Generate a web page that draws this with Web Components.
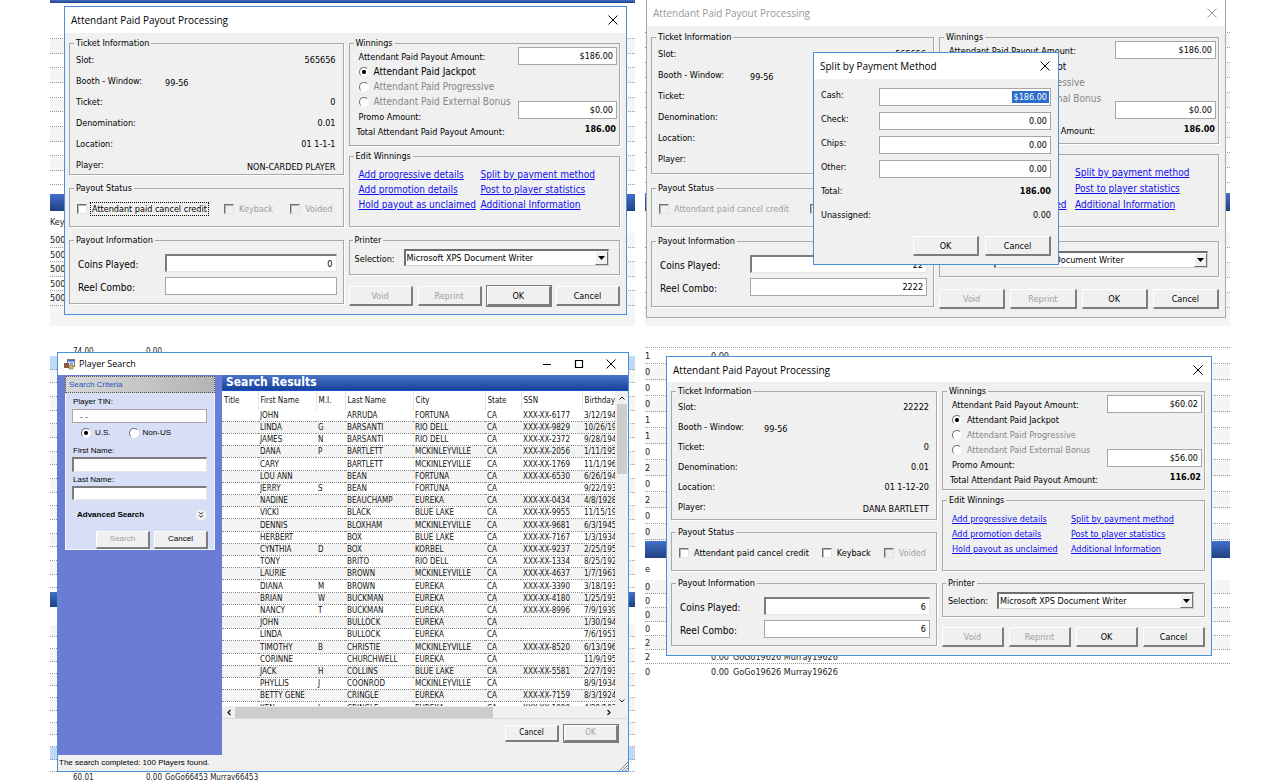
<!DOCTYPE html>
<html lang="en">
<head>
<meta charset="utf-8">
<title>Attendant Paid Payout Processing</title>
<style>
  body { margin: 0; background: #fff; }
</style>
</head>
<body>
<payout-gallery></payout-gallery>

<script>
const UI = '"DejaVu Sans Condensed","DejaVu Sans","Noto Sans",sans-serif';
const TITLE = '"Open Sans","Noto Sans",sans-serif';

/* Classic control look shared by every window */
const controls = `
  *, *::before, *::after { box-sizing: border-box; }
  input, select, button { font: inherit; color: inherit; margin: 0; border-radius: 0; }
  input[type=text] {
    width: 100%; height: 18px; padding: 0 3px; text-align: right;
    background: #fff; border: 1px solid #a6a6a6; outline: 0;
  }
  input[type=text].sunken {
    border-color: #7c7c7c #e6e6e6 #e6e6e6 #7c7c7c; border-width: 2px 1px 1px 2px;
  }
  input[type=checkbox] {
    appearance: none; flex: none; width: 10px; height: 10px; background: #fff;
    border: 1px solid; border-color: #707070 #e3e3e3 #e3e3e3 #707070;
    box-shadow: inset 1px 1px 0 #b5b5b5;
  }
  input[type=checkbox]:disabled { background: #f0f0f0; }
  input[type=radio] {
    appearance: none; flex: none; width: 10px; height: 10px; background: #fff;
    border: 1px solid; border-color: #707070 #f8f8f8 #f8f8f8 #707070; border-radius: 50%;
  }
  input[type=radio]:checked { background: radial-gradient(circle, #000 0 1.5px, #fff 2.5px); }
  button {
    height: 20px; padding: 0; background: #f0f0f0; text-align: center;
    border-style: solid; border-width: 1px 2px 2px 1px;
    border-color: #fff #7d7d7d #7d7d7d #fff;
  }
  button.default { box-shadow: 0 0 0 1px #7a7a7a; }
  :disabled, .off { color: #a0a0a0; }
  label, legend { white-space: nowrap; }
`;

function define(name, html, setup) {
  const template = document.createElement('template');
  template.innerHTML = html;
  customElements.define(name, class extends HTMLElement {
    constructor() {
      super();
      this.attachShadow({ mode: 'open' }).append(template.content.cloneNode(true));
    }
    connectedCallback() {
      if (setup && !this.ready) { this.ready = true; setup(this, this.shadowRoot); }
    }
  });
}

/* Striped list that lies behind a window */
const repeat = (heights, cells = []) =>
  heights.map((h, i) => [h, i % 2 ? 'row' : 'row alt', cells[i] || []]);
const d = (...list) => list.map(t => [[66, t]]);
const backdrops = {
  first: { size: 9, rows: [
    [3, 'band'], [36, 'line'],
    ...repeat([15, 14, 15, 15, 14, 15, 15, 14, 15, 14]),
    [9, ''], [17, 'band'], [22, 'head', [[40, 'Key']]],
    ...repeat([15, 14, 15, 14, 15], Array(5).fill([[40, '500']])),
    [20, 'tail']] },
  second: { size: 9, rows: [
    [33, 'line'],
    ...repeat([15, 15, 15, 15, 15, 15, 15, 15, 15, 15]),
    [10, ''], [18, 'band'], [22, ''],
    ...repeat([15, 15, 15, 15, 15]),
    [18, 'tail']] },
  third: { size: 8, rows: [
    [9, 'line first', [[23, ''], [73, '74.00'], [19, '0.00']]], [14, 'row pick'],
    ...repeat([13, 14, 14, 13, 14, 14, 13, 14, 14, 13, 14, 14, 13, 14, 14, 13]),
    [4, ''], [15, 'band'], [18, ''],
    ...repeat([12, 12, 13, 12, 12, 12, 13, 12, 12, 12]),
    [13, 'row pick'], [12, 'row'],
    [9, 'last', [[23, ''], [73, '60.01'], [19, '0.00'], [100, 'GoGo66453 Murray66453']]]] },
  fourth: { size: 9, rows: [
    [1, 'line'],
    [16, 'row', [[66, '1'], [22, '0.00']]],
    ...repeat(Array(11).fill(16), d('0', '0', '0', '1', '1', '0', '2', '0', '2', '0', '0')),
    [1, ''], [17, 'band'], [22, 'head', [[66, 'e']]],
    ...repeat([14, 14, 14, 14, 14, 14], [...d('0', '0', '0', '0', '2'),
      [[66, '2'], [22, '0.00'], [120, 'GoGo19626 Murray19626']]]),
    [15, '', [[66, '0'], [22, '0.00'], [120, 'GoGo19626 Murray19626']]]] }
};

define('list-backdrop', `
  <style>
    :host { display: block; overflow: hidden; color: #222; font-family: ${UI}; }
    div { display: flex; box-sizing: border-box; align-items: center; overflow: hidden; white-space: nowrap; background: #fff; }
    .line, .row { border-bottom: 1px dotted #999; }
    .alt { background: #f5f5f5; }
    .pick { background: #bfdaf6; }
    .tail { background: #f5f5f5; }
    .band { background: linear-gradient(#4470cc, #1f3f80); }
    span { flex: none; }
    .first { align-items: flex-end; border: 0; }
    .last { align-items: flex-start; line-height: 12px; }
  </style>`, (host, root) => {
    const { size, rows } = backdrops[host.getAttribute('rows')];
    host.style.fontSize = size + 'px';
    for (const [height, kind, cells = []] of rows) {
      const row = document.createElement('div');
      row.className = kind;
      row.style.height = height + 'px';
      for (const [width, text] of cells) {
        const cell = document.createElement('span');
        cell.style.width = width + 'px';
        cell.textContent = text;
        row.append(cell);
      }
      root.append(row);
    }
  });

/* Window frame: title bar and client area */
define('app-window', `
  <style>
    ${controls}
    :host {
      display: flex; flex-direction: column; box-sizing: border-box;
      border: 1px solid #4a90d9; background: #f0f0f0; color: #000; font: 9px/12px ${UI};
    }
    :host([inactive]) { border-color: #a8a8a8; }
    header {
      display: flex; align-items: center; flex: none; height: var(--bar, 26px);
      padding: 0 7px 0 6px; background: #fff; font: var(--title, 10px)/14px ${TITLE};
    }
    h2 { flex: 1; margin: 0; font: inherit; }
    button { display: grid; place-items: center; width: 12px; height: 12px; border: 0; background: none; }
    svg { display: block; }
    :host([inactive]) header { color: #999; }
    .extra { display: none; margin-right: 20px; }
    :host([sizable]) .extra { display: grid; }
    :host([sizable]) header { padding-right: 11px; }
  </style>
  <header>
    <slot name="icon"></slot>
    <h2></h2>
    <button class="extra" aria-label="Minimize"><svg width="10" height="10"><path d="M1 5.5h8" stroke="currentColor"/></svg></button>
    <button class="extra" aria-label="Maximize"><svg width="10" height="10"><path d="M1.5 1.5h7v7h-7z" fill="none" stroke="currentColor" stroke-width="1.2"/></svg></button>
    <button class="close" aria-label="Close"><svg width="10" height="10"><path d="M.5.5l9 9M9.500.5l-9 9" stroke="currentColor"/></svg></button>
  </header>
  <slot></slot>`, (host, root) => {
    root.querySelector('h2').textContent = host.getAttribute('heading');
  });

define('payout-window', `
  <style>
    ${controls}
    :host { display: block; font: 9px/12px ${UI}; }
    .body {
      display: grid; grid-template-columns: 274fr 271fr; column-gap: 5px; align-items: start;
      padding: var(--top, 4px) 6px 8px 4px;
    }
    .col { display: flex; flex-direction: column; min-width: 0; }
    .status, .info { margin-top: var(--gap); }
    fieldset {
      display: block; min-width: 0; margin: 0; padding: 0 6px; border: 1px solid #a9a9a9;
      box-shadow: 1px 1px 0 #fff;
    }
    legend { padding: 0 2px; margin-left: -2px; line-height: 12px; }
    dl { margin: 0; }
    dl div { display: flex; height: var(--row); align-items: center; }
    dt { width: var(--key); white-space: nowrap; }
    dd { flex: 1; margin: 0; text-align: right; padding-right: 1px; }
    .booth dd { text-align: left; }
    .low dd { padding-top: 4px; }
    .ticket { height: var(--ticket); }
    .status { height: 45px; }
    .checks { display: flex; align-items: center; height: 30px; padding: 0 2px 0 1px; }
    .checks label { margin: 0 auto 0 3px; padding: 1px; border: 1px solid transparent; line-height: 10px; }
    .checks label:last-of-type { margin-right: 0; }
    .checks .focus { border: 1px dotted #000; }
    .info { height: var(--info); }
    .fields { display: flex; flex-direction: column; gap: 5px; padding: 8px 0 0 2px; font-size: 10px; }
    .fields div { display: flex; align-items: center; }
    .fields label { flex: none; width: calc(var(--key) - 2px); padding-top: 4px; }
    .fields input { font-size: 9px; }
    .winnings { height: var(--winnings); padding: 0 2px 0 6px; }
    .money { display: flex; justify-content: space-between; }
    .left > * { display: flex; align-items: center; height: var(--line); padding-left: 3px; }
    .left .pick { font-size: var(--wide); gap: 5px; }
    .left .off { color: #868686; }
    .left .total { padding: 0 0 0 1px; white-space: nowrap; }
    .right { display: flex; flex-direction: column; justify-content: space-between; align-items: flex-end; width: var(--amount); margin-top: -2px; }
    .gap { flex: 1; }
    .right b { line-height: 20px; padding-right: 1px; }
    .edit { height: var(--edit); margin-top: 4px; }
    nav { display: grid; grid-template-columns: var(--links) 1fr; grid-auto-rows: var(--line); align-items: center; padding: 5px 0 0 3px; font-size: var(--wide); }
    a { color: #0f0fee; white-space: nowrap; justify-self: start; text-underline-offset: 1px; }
    .printer { height: var(--printer); margin-top: var(--gap); padding: 0 10px 0 5px; }
    .choose { display: flex; align-items: center; height: calc(var(--printer) - 18px); }
    .choose label { flex: none; width: 49px; padding-top: 2px; }
    .drop { position: relative; flex: 1; }
    select {
      display: block; appearance: none; width: 100%; height: 17px; padding: 0 1px; background: #fff;
      border: solid; border-width: 2px 1px 1px 2px; border-color: #6f6f6f #d0d0d0 #d0d0d0 #6f6f6f;
    }
    .drop span {
      position: absolute; inset: 2px 1px 1px auto; width: 13px; display: grid; place-items: center;
      background: #f0f0f0; border: 1px solid; border-color: #fff #707070 #707070 #fff; pointer-events: none;
    }
    .buttons { display: grid; grid-template-columns: repeat(4, 1fr); gap: 5px; margin-top: calc(var(--gap) + 4px); }
  </style>
  <app-window heading="Attendant Paid Payout Processing">
    <div class="body">
      <div class="col">
        <fieldset class="ticket"><legend>Ticket Information</legend>
          <dl>
            <div><dt>Slot:</dt><dd data-f="machine"></dd></div>
            <div class="booth low"><dt>Booth - Window:</dt><dd>99-56</dd></div>
            <div><dt>Ticket:</dt><dd>0</dd></div>
            <div><dt>Denomination:</dt><dd>0.01</dd></div>
            <div><dt>Location:</dt><dd data-f="location"></dd></div>
            <div class="low"><dt>Player:</dt><dd data-f="player"></dd></div>
          </dl>
        </fieldset>
        <fieldset class="status"><legend>Payout Status</legend>
          <div class="checks">
            <input type="checkbox" id="credit"><label for="credit">Attendant paid cancel credit</label>
            <input type="checkbox" id="keyback"><label for="keyback">Keyback</label>
            <input type="checkbox" id="voided"><label for="voided">Voided</label>
          </div>
        </fieldset>
        <fieldset class="info"><legend>Payout Information</legend>
          <div class="fields">
            <div><label for="coins">Coins Played:</label><input type="text" id="coins" class="sunken"></div>
            <div><label for="reel">Reel Combo:</label><input type="text" id="reel"></div>
          </div>
        </fieldset>
      </div>
      <div class="col">
        <fieldset class="winnings"><legend>Winnings</legend>
          <div class="money">
            <div class="left">
              <label for="amount">Attendant Paid Payout Amount:</label>
              <label class="pick"><input type="radio" name="kind" checked>Attendant Paid Jackpot</label>
              <label class="pick off"><input type="radio" name="kind" disabled>Attendant Paid Progressive</label>
              <label class="pick off"><input type="radio" name="kind" disabled>Attendant Paid External Bonus</label>
              <label for="promo">Promo Amount:</label>
              <span class="total">Total Attendant Paid Payout Amount:</span>
            </div>
            <div class="right">
              <input type="text" id="amount"><span class="gap"></span>
              <input type="text" id="promo"><b data-f="total"></b>
            </div>
          </div>
        </fieldset>
        <fieldset class="edit"><legend>Edit Winnings</legend>
          <nav>
            <a href="#progressive">Add progressive details</a><a href="#split">Split by payment method</a>
            <a href="#promotion">Add promotion details</a><a href="#post">Post to player statistics</a>
            <a href="#hold">Hold payout as unclaimed</a><a href="#additional">Additional Information</a>
          </nav>
        </fieldset>
        <fieldset class="printer"><legend>Printer</legend>
          <div class="choose">
            <label for="printer">Selection:</label>
            <div class="drop">
              <select id="printer"><option>Microsoft XPS Document Writer</option></select>
              <span><svg width="7" height="4"><path d="M0 0h7L3.500 4z"/></svg></span>
            </div>
          </div>
        </fieldset>
        <div class="buttons">
          <button disabled>Void</button><button disabled>Reprint</button><button id="ok">OK</button><button>Cancel</button>
        </div>
      </div>
    </div>
  </app-window>`, (host, root) => {
    const get = name => host.getAttribute(name) || '';
    root.querySelectorAll('[data-f]').forEach(el => el.textContent = get(el.dataset.f));
    for (const id of ['coins', 'reel', 'amount', 'promo']) root.getElementById(id).value = get(id);
    for (const id of get('off').split(' ')) {
      root.getElementById(id).disabled = true;
      root.querySelector(`label[for=${id}]`).classList.add('off');
    }
    root.querySelector('app-window').toggleAttribute('inactive', host.hasAttribute('inactive'));
    if (host.hasAttribute('focused')) {
      root.querySelector('label[for=credit]').classList.add('focus');
      root.getElementById('ok').classList.add('default');
    }
  });

define('split-window', `
  <style>
    ${controls}
    :host { display: block; font: 9px/12px ${UI}; }
    form { display: grid; grid-template-columns: 58px 1fr; row-gap: 6px; padding: 9px 7px 8px 7px; }
    form > * { min-height: 18px; }
    label, .name { line-height: 15px; }
    output { text-align: right; line-height: 15px; }
    input[type=text].selected { color: #fff; background: linear-gradient(#2a6dcc, #2a6dcc) right 1px center / 37px 12px no-repeat #fff; }
    .buttons { grid-column: 1 / -1; display: grid; grid-template-columns: 66px 66px; gap: 6px; justify-content: end; padding-top: 4px; }
    .total { font-weight: bold; }
  </style>
  <app-window heading="Split by Payment Method">
    <form>
      <label for="cash">Cash:</label><input type="text" id="cash" class="selected" value="$186.00">
      <label for="check">Check:</label><input type="text" id="check" value="0.00">
      <label for="chips">Chips:</label><input type="text" id="chips" value="0.00">
      <label for="other">Other:</label><input type="text" id="other" value="0.00">
      <span class="name">Total:</span><output class="total">186.00</output>
      <span class="name">Unassigned:</span><output>0.00</output>
      <div class="buttons"><button type="button">OK</button><button type="button">Cancel</button></div>
    </form>
  </app-window>`);

const players = `
JOHN||ARRUDA|FORTUNA|XXX-XX-6177|3/12/1944
LINDA|G|BARSANTI|RIO DELL|XXX-XX-9829|10/26/1950
JAMES|N|BARSANTI|RIO DELL|XXX-XX-2372|9/28/1944
DANA|P|BARTLETT|MCKINLEYVILLE|XXX-XX-2056|1/11/1955
CARY||BARTLETT|MCKINLEYVILLE|XXX-XX-1769|11/1/1966
LOU ANN||BEAN|FORTUNA|XXX-XX-6530|6/26/1944
JERRY|S|BEAN|FORTUNA||9/22/1933
NADINE||BEAUCHAMP|EUREKA|XXX-XX-0434|4/8/1928
VICKI||BLACK|BLUE LAKE|XXX-XX-9955|11/15/1950
DENNIS||BLOXHAM|MCKINLEYVILLE|XXX-XX-9681|6/3/1945
HERBERT||BOX|BLUE LAKE|XXX-XX-7167|1/3/1934
CYNTHIA|D|BOX|KORBEL|XXX-XX-9237|2/25/1955
TONY||BRITO|RIO DELL|XXX-XX-1334|8/25/1922
LAURIE||BROWN|MCKINLEYVILLE|XXX-XX-4637|1/7/1961
DIANA|M|BROWN|EUREKA|XXX-XX-3390|3/18/1933
BRIAN|W|BUCKMAN|EUREKA|XXX-XX-4180|1/25/1933
NANCY|T|BUCKMAN|EUREKA|XXX-XX-8996|7/9/1939
JOHN||BULLOCK|EUREKA||1/30/1944
LINDA||BULLOCK|EUREKA||7/6/1951
TIMOTHY|B|CHRISTIE|MCKINLEYVILLE|XXX-XX-8520|6/13/1966
CORINNE||CHURCHWELL|EUREKA||11/9/1955
JACK|H|COLLINS|BLUE LAKE|XXX-XX-5581|2/27/1933
PHYLLIS|J|COONROD|MCKINLEYVILLE||8/9/1934
BETTY GENE||CRINGLE|EUREKA|XXX-XX-7159|8/3/1924
KEN|J|CRINGLE|EUREKA|XXX-XX-1990|4/29/1933`.trim().split('\n').map(r => {
  const [first, mi, last, city, ssn, born] = r.split('|');
  return ['', first, mi, last, city, 'CA', ssn, born];
});

define('player-table', `
  <style>
    :host { display: block; overflow: hidden; background: #fff; font: 8px/11px ${UI}; color: #111; }
    table { width: 100%; table-layout: fixed; border-collapse: collapse; }
    th, td { padding: 0 0 0 2px; text-align: left; font-weight: normal; white-space: nowrap; overflow: hidden; }
    th { height: 19px; border-right: 1px solid #e5e5e5; }
    th:last-child { border: 0; }
    td { height: 11px; border-bottom: 1px dotted #8c8c8c; }
    tbody tr:nth-child(5n) td { height: 12px; }
    tbody tr:nth-child(even) { background: #f4f4f4; }
  </style>
  <table>
    <colgroup><col style="width:36px"><col style="width:58px"><col style="width:29px"><col style="width:68px"><col style="width:72px"><col style="width:36px"><col style="width:61px"><col></colgroup>
    <thead><tr><th>Title</th><th>First Name</th><th>M.I.</th><th>Last Name</th><th>City</th><th>State</th><th>SSN</th><th>Birthday</th></tr></thead>
    <tbody></tbody>
  </table>`, (host, root) => {
    const body = root.querySelector('tbody');
    for (const player of players) {
      const row = body.insertRow();
      for (const text of player) row.insertCell().textContent = text;
    }
  });

define('search-window', `
  <style>
    ${controls}
    :host { display: block; font: 8px/12px ${UI}; }
    app-window { --bar: 22px; --title: 9px; height: 100%; }
    .icon { margin-right: 4px; }
    .main { display: grid; grid-template-columns: 164px 1fr; flex: 1; min-height: 0; }
    aside { background: #6a7cd3; padding: 1px 7px 0; }
    h3 { margin: 0; height: 17px; padding-left: 3px; font: 8px/16px "Liberation Sans",sans-serif; color: #1f55c4; background: linear-gradient(90deg, #d8d8d8, #b4b4b4); border: 1px dotted #555; }
    form { display: flex; flex-direction: column; padding: 3px 7px 0 6px; height: 157px; background: #d6dff5; border: 1px solid #f4f6fc; border-top: 0; font: 8px/12px "Liberation Sans",sans-serif; }
    form label { line-height: 12px; padding-left: 1px; }
    form input[type=text] { text-align: left; height: 15px; margin-bottom: 2px; }
    form #tin { margin: 1px 0 4px; padding-left: 7px; }
    .kind { display: flex; gap: 17px; padding: 0 0 6px 8px; }
    .kind label { display: flex; align-items: center; gap: 4px; }
    .more { display: flex; justify-content: space-between; align-items: center; height: 26px; padding: 0 0 0 5px; }
    .actions { display: flex; gap: 4px; justify-content: flex-end; margin: 4px -1px 0 0; }
    .actions button { width: 54px; height: 18px; }
    .results { display: flex; flex-direction: column; min-width: 0; min-height: 0; }
    h1 { flex: none; margin: 0; height: 16px; padding-left: 4px; font: bold 12px/14px ${UI}; color: #fff; background: linear-gradient(#4a74cb, #17429b); border-bottom: 1px solid #1450c8; }
    .view { display: grid; grid-template-columns: 1fr 13px; height: 315px; }
    .bar { display: flex; align-items: center; background: #f0f0f0; }
    .v { flex-direction: column; padding: 5px 0 3px; }
    .v i { width: 10px; height: 70px; margin: 4px 0 auto; background: #cdcdcd; }
    .h { height: 13px; padding: 0 16px 0 4px; border-bottom: 1px solid #dcdcdc; }
    .h i { width: 258px; height: 11px; margin: 0 auto 0 3px; background: #cdcdcd; }
    .bottom { display: flex; gap: 5px; justify-content: flex-end; padding: 6px 10px; font: 8px/12px ${UI}; }
    .bottom button { width: 54px; height: 17px; }
    footer { display: flex; justify-content: space-between; align-items: center; flex: none; height: 16px; padding: 0 0 0 1px; font: 8px/12px "Liberation Sans",sans-serif; }
    footer svg { align-self: flex-end; }
    svg { flex: none; }
  </style>
  <app-window heading="Player Search" sizable>
    <svg slot="icon" class="icon" width="11" height="11" viewBox="0 0 11 11">
      <rect x="3.500" y=".5" width="7" height="7" fill="#e8e8e8" stroke="#777"/><rect x="4" y="1" width="6" height="1.500" fill="#3b6ed0"/>
      <rect x=".5" y="4.500" width="4" height="4" fill="#b5452c" stroke="#666"/><rect x="5" y="6" width="4" height="4" fill="#e4b13c" stroke="#777" stroke-width=".6"/><rect x="6" y="3.500" width="3" height="2" fill="#6f97dd"/>
    </svg>
    <div class="main">
      <aside>
        <h3>Search Criteria</h3>
        <form>
          <label for="tin">Player TIN:</label><input type="text" id="tin" value="- -">
          <div class="kind"><label><input type="radio" name="c" checked>U.S.</label><label><input type="radio" name="c">Non-US</label></div>
          <label for="first">First Name:</label><input type="text" id="first" class="sunken">
          <label for="last">Last Name:</label><input type="text" id="last" class="sunken">
          <div class="more"><b>Advanced Search</b><svg width="12" height="12" viewBox="0 0 12 12"><circle cx="6" cy="6" r="5.500" fill="#f2f2f2"/><path d="M4 3.200l2 2 2-2M4 6.200l2 2 2-2" fill="none" stroke="#333"/></svg></div>
          <div class="actions"><button type="button" disabled>Search</button><button type="button">Cancel</button></div>
        </form>
      </aside>
      <div class="results">
        <h1>Search Results</h1>
        <div class="view">
          <player-table></player-table>
          <div class="bar v">
            <svg width="6" height="4"><path d="M.5 3.500L3 1l2.500 2.500" fill="none" stroke="#222"/></svg><i></i>
            <svg width="6" height="4"><path d="M.5.5L3 3 5.500.5" fill="none" stroke="#222"/></svg>
          </div>
        </div>
        <div class="bar h">
          <svg width="6" height="7"><path d="M4.500 1L2 3.500 4.500 6" fill="none" stroke="#111" stroke-width="1.200"/></svg><i></i>
          <svg width="6" height="7"><path d="M1.500 1L4 3.500 1.500 6" fill="none" stroke="#111" stroke-width="1.200"/></svg>
        </div>
        <div class="bottom"><button>Cancel</button><button class="default" disabled>OK</button></div>
      </div>
    </div>
    <footer><span>The search completed: 100 Players found.</span><svg width="10" height="10"><path d="M1 10l9-9M4 10l6-6M7 10l3-3" stroke="#888"/></svg></footer>
  </app-window>`);

define('payout-gallery', `
  <style>
    :host { display: grid; grid-template-columns: 1fr 1fr; gap: 21px 10px; align-items: start; padding: 0 50px; }
    section { position: relative; overflow: hidden; min-width: 0; }
    payout-window, search-window, split-window { position: absolute; }
    .a { inset: 6px 8px auto 14px; --gap: 7px; --row: 21px; --line: 15px; --ticket: 138px; --info: 70px; --winnings: 109px; --edit: 77px; --printer: 41px; --links: 122px; --wide: 10px; --key: 89px; --amount: 99px; }
    .b { inset: -1px 4px auto 1px; --top: 5px; --gap: 8px; --row: 21px; --line: 16px; --ticket: 143px; --info: 72px; --winnings: 113px; --edit: 79px; --printer: 42px; --links: 126px; --wide: 10px; --key: 92px; --amount: 101px; }
    .c { inset: 9px 18px auto 21px; --bar: 25px; --top: 3px; --gap: 6px; --row: 20px; --line: 15px; --ticket: 135px; --info: 69px; --winnings: 105px; --edit: 77px; --printer: 40px; --links: 119px; --wide: 9px; --key: 86px; --amount: 95px; }
    .s { inset: 5px 6px 9px 7px; }
    .split { top: 52px; left: 168px; right: 171px; }
  </style>
  <section>
    <list-backdrop rows="first"></list-backdrop>
    <payout-window class="a" focused off="keyback voided" machine="565656" location="01 1-1-1"
      player="NON-CARDED PLAYER" coins="0" amount="$186.00" promo="$0.00" total="186.00"></payout-window>
  </section>
  <section>
    <list-backdrop rows="second"></list-backdrop>
    <payout-window class="b" inactive off="credit keyback voided" machine="565656" location="01 1-1-1"
      player="NON-CARDED PLAYER" coins="22" reel="2222" amount="$186.00" promo="$0.00" total="186.00"></payout-window>
    <split-window class="split"></split-window>
  </section>
  <section>
    <list-backdrop rows="third"></list-backdrop>
    <search-window class="s"></search-window>
  </section>
  <section>
    <list-backdrop rows="fourth"></list-backdrop>
    <payout-window class="c" off="voided" machine="22222" location="01 1-12-20"
      player="DANA BARTLETT" coins="6" reel="6" amount="$60.02" promo="$56.00" total="116.02"></payout-window>
  </section>`);
</script>
</body>
</html>
